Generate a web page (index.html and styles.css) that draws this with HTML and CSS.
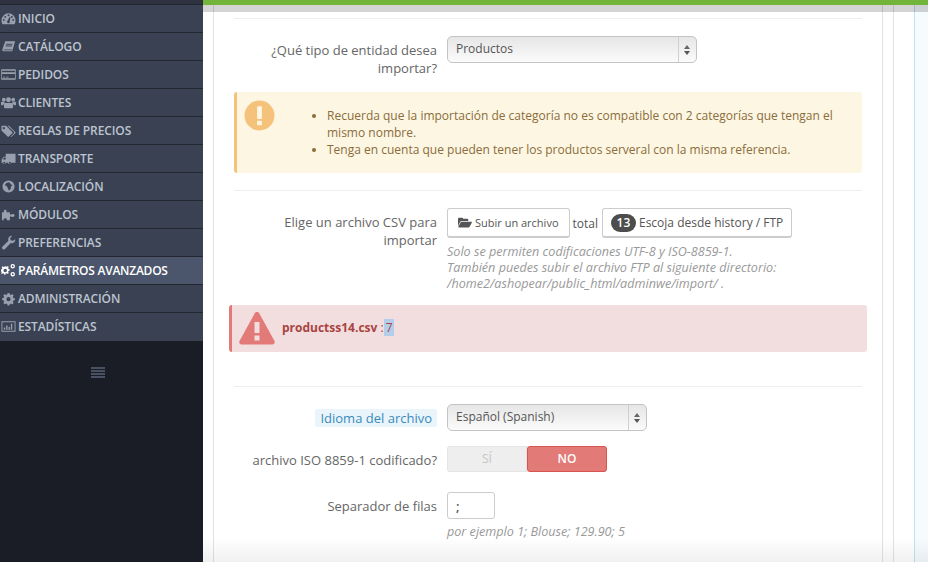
FILE: index.html
```html
<!DOCTYPE html>
<html>
<head>
  <title>Importar CSV</title>
  <link rel="stylesheet" href="styles.css">
</head>
<body>

  <!-- Sidebar -->
  <div class="sidebar">
    <ul class="menu">
      <li><svg viewBox="0 0 16 16"><path d="M8 2.500a7.500 7.500 0 0 0-7.500 7.500c0 1.500.4 2.800 1.100 4h12.800c.7-1.200 1.100-2.500 1.100-4A7.500 7.500 0 0 0 8 2.500zM3 10.500a1 1 0 1 1 0-2 1 1 0 0 1 0 2zm1.500-3.200a1 1 0 1 1 0-2 1 1 0 0 1 0 2zM8 5.500a1 1 0 1 1 0-2 1 1 0 0 1 0 2zm1.400 6.500a1.500 1.500 0 1 1-2.500-1.500l2.500-4.300.8.300-1 4.700c.2.200.2.500.2.800zm2.100-4.700a1 1 0 1 1 0-2 1 1 0 0 1 0 2zM13 10.500a1 1 0 1 1 0-2 1 1 0 0 1 0 2z"/></svg>Inicio</li>
      <li><svg viewBox="0 0 16 16"><path d="M4.500 2.500h10.500l-.3 1-2.700 9.500H2.500C1.500 13 1.300 12 1.500 11zM5.500 5v1h6.500l.3-1zM5 7v1h6.500l.3-1zM3 11.200c-.2.500 0 .8.500.8h8.200l.3-.8z"/></svg>Catálogo</li>
      <li><svg viewBox="0 0 16 16"><path fill-rule="evenodd" d="M1 2.500h14a.8.800 0 0 1 .8.800v9.400a.8.800 0 0 1-.8.800H1a.8.800 0 0 1-.8-.8V3.300A.8.800 0 0 1 1 2.500zM1 4v1.500h14V4zm0 3.500V12h14V7.500zM2 10.500h2.500v.8H2zm3.500 0h2.500v.8H5.500z"/></svg>Pedidos</li>
      <li><svg viewBox="0 0 16 16"><circle cx="3" cy="5" r="2"/><circle cx="13" cy="5" r="2"/><circle cx="8" cy="5" r="2.600"/><path d="M0 8.200C0 7.500.6 7.300 1.500 7.300h2.300c.2 1 .1 1.700-.6 2.400-.5.400-.8.800-1 1.300H1c-.6 0-1-.4-1-1zM16 8.200c0-.7-.6-.9-1.500-.9h-2.300c-.2 1-.1 1.700.6 2.400.5.400.8.800 1 1.300H15c.6 0 1-.4 1-1zM5 8.500h6c1 0 1.800.7 1.800 1.700V13c0 .6-.4 1-1 1H4.200c-.6 0-1-.4-1-1v-2.800C3.200 9.200 4 8.500 5 8.500z"/></svg>Clientes</li>
      <li><svg viewBox="0 0 16 16"><path fill-rule="evenodd" d="M.5 3h5l6.500 6.500a1 1 0 0 1 0 1.400l-3.600 3.600a1 1 0 0 1-1.400 0L.5 8zM3 4.300a1.200 1.200 0 1 0 0 2.400 1.200 1.200 0 0 0 0-2.400z"/><path d="M7 3h1.500l6.700 6.500a1 1 0 0 1 0 1.400l-3.600 3.600c-.4.400-.9.400-1.300.1l3.200-3.300c.6-.6.600-1.600 0-2.200z"/></svg>Reglas de precios</li>
      <li><svg viewBox="0 0 16 16"><path fill-rule="evenodd" d="M5 3h10.500v9.500H11a1.800 1.800 0 0 1-3.500 0H5.200a1.800 1.800 0 0 1-3.500 0H.6V9l2.200-3H5zM3.200 7L1.800 9H5V7zM3.500 11.500a1 1 0 1 0 0 2 1 1 0 0 0 0-2zm6 0a1 1 0 1 0 0 2 1 1 0 0 0 0-2z"/></svg>Transporte</li>
      <li><svg viewBox="0 0 16 16"><path fill-rule="evenodd" d="M8 1.500a6.500 6.500 0 1 1 0 13 6.500 6.500 0 0 1 0-13zM9 3.500l-3 .5-2 2.500 2.500 1.500 1 2.500 1 2 2-2.500v-2l2-1.500-1.500-.5-1-1z"/></svg>Localización</li>
      <li><svg viewBox="0 0 16 16"><path d="M1 5.500h2.300C2.800 4.500 3 3 4.500 3s1.700 1.500 1.200 2.500H9.500V8h1.300c.5-.8 3.700-.9 3.700 1s-3.200 1.800-3.700 1H9.500v4H6c.5-1 .3-2-1.500-2s-2 1-1.500 2H1z"/></svg>Módulos</li>
      <li><svg viewBox="0 0 16 16"><path d="M15.200 4.500c.5 2.700-2.200 5-4.800 4.100l-6.200 6.200a1.700 1.700 0 0 1-2.500-2.500l6.200-6.200C7 3 9.300.3 12 .8L9.800 3.200l.5 2.500 2.500.5z"/></svg>Preferencias</li>
      <li class="active"><svg viewBox="0 0 16 16"><path fill-rule="evenodd" d="M5 3.500l1.300.4.900-.8 1.100 1.100-.7 1 .4 1.100 1.200.3v1.600l-1.200.3-.4 1.100.7 1-1.100 1.100-.9-.8-1.300.4-.3 1.200H3.500l-.3-1.200-1.100-.4-1 .8L0 11.100l.7-1L.3 9 0 8.600V6.900l1-.3.400-1.100-.7-1 1.100-1.100 1 .8L4 3.800zM4.500 6a1.900 1.900 0 1 0 0 3.800 1.900 1.900 0 0 0 0-3.800z"/><path fill-rule="evenodd" d="M12.500 1a2.400 2.400 0 1 1 0 4.800 2.400 2.400 0 0 1 0-4.800zm0 1.400a1 1 0 1 0 0 2 1 1 0 0 0 0-2zM12.500 9.500a2.400 2.400 0 1 1 0 4.800 2.400 2.400 0 0 1 0-4.800zm0 1.400a1 1 0 1 0 0 2 1 1 0 0 0 0-2z"/></svg>Parámetros avanzados</li>
      <li><svg viewBox="0 0 16 16"><path fill-rule="evenodd" d="M7 2h2l.4 1.700 1.200.5L12 3.300l1.500 1.500-.9 1.400.5 1.200 1.700.4v2l-1.700.4-.5 1.200.9 1.400-1.500 1.500-1.400-.9-1.200.5L9 15.500H7l-.4-1.700-1.200-.5-1.400.9-1.500-1.500.9-1.400-.5-1.200L1.200 9.700v-2l1.700-.4.5-1.200-.9-1.400L4 3.300l1.400.9 1.200-.5zM8 6.500a2.200 2.200 0 1 0 0 4.400 2.200 2.200 0 0 0 0-4.400z"/></svg>Administración</li>
      <li><svg viewBox="0 0 16 16"><path fill-rule="evenodd" d="M.5 2.500h15v11H.5zM1.500 3.500v9h13v-9zM3 9h1.500v2.500H3zm2.500-2h1.500v4.500H5.500zm2.500 1.500h1.500v3H8zM10.500 5H12v6.500h-1.500z"/></svg>Estadísticas</li>
    </ul>
    <div class="collapse"><span></span><span></span><span></span><span></span></div>
  </div>

  <!-- Content -->
  <div class="content">
    <div class="greenbar"></div>
    <div class="shade-top"></div>
    <div class="shade-bottom"></div>
    <div class="columns">
      <div class="panel">
        <hr class="first">

        <div class="row row-entity">
          <label>¿Qué tipo de entidad desea importar?</label>
          <div class="fake-select wide"><span>Productos</span><i class="arrows"></i></div>
        </div>

        <div class="alert warning">
          <div class="alert-icon"><svg viewBox="0 0 32 32"><circle cx="16" cy="16" r="15.500" fill="#f5c27c"/><rect x="13.500" y="6.500" width="5" height="13" rx="1" fill="#fdf6e3"/><rect x="13.500" y="21.500" width="5" height="4.500" rx=".5" fill="#fdf6e3"/></svg></div>
          <ul>
            <li>Recuerda que la importación de categoría no es compatible con 2 categorías que tengan el mismo nombre.</li>
            <li>Tenga en cuenta que pueden tener los productos serveral con la misma referencia.</li>
          </ul>
        </div>

        <hr>

        <div class="row row-file">
          <label>Elige un archivo CSV para importar</label>
          <div>
            <div class="file-actions">
              <button class="btn btn-upload"><svg viewBox="0 0 18 14"><path d="M0 2.500C0 1.500.7 1 1.500 1h3.800c.8 0 1 .8 1.500 1.200h5c.8 0 1.400.5 1.400 1.300V5H4.500c-.8 0-1.300.4-1.600 1L0 11.500zM4.600 6h12.400c.7 0 1 .6.700 1.200l-2.800 5.300c-.3.600-.8.900-1.400.9H1.200c-.7 0-1-.6-.7-1.200l2.800-5.300C3.600 6.300 4 6 4.600 6z"/></svg>Subir un archivo</button>
              <span class="total">total</span>
              <button class="btn btn-history"><b class="badge">13</b>Escoja desde history / FTP</button>
            </div>
            <p class="help">Solo se permiten codificaciones UTF-8 y ISO-8859-1.<br>También puedes subir el archivo FTP al siguiente directorio:<br>/home2/ashopear/public_html/adminwe/import/ .</p>
          </div>
        </div>

        <div class="alert danger">
          <svg viewBox="0 0 36 33"><path d="M18 0c1 0 1.700.5 2.200 1.300l15.300 27.700c.8 1.500-.2 3.500-2 3.500h-31c-1.800 0-2.800-2-2-3.500L15.800 1.300C16.300.5 17 0 18 0z" fill="#e27b78"/><rect x="15.500" y="10" width="5" height="11" fill="#f2dede"/><rect x="15.500" y="23.500" width="5" height="5" fill="#f2dede"/></svg>
          <p><b>productss14.csv</b> <span class="colon">:</span> <span class="selected">7</span></p>
        </div>

        <hr class="after-danger">

        <div class="row row-lang">
          <label><span class="hint">Idioma del archivo</span></label>
          <div class="fake-select"><span>Español (Spanish)</span><i class="arrows"></i></div>
        </div>

        <div class="row row-iso">
          <label>archivo ISO 8859-1 codificado?</label>
          <div class="toggle"><span class="yes">SÍ</span><span class="no">NO</span></div>
        </div>

        <div class="row row-sep">
          <label>Separador de filas</label>
          <div>
            <input class="small-input" type="text" value=";">
            <p class="help">por ejemplo 1; Blouse; 129.90; 5</p>
          </div>
        </div>
      </div>
      <div class="rail"></div>
      <div class="rail-wide"></div>
      <div class="aside"></div>
    </div>
  </div>

</body>
</html>
```

FILE: styles.css
```css
* {
  box-sizing: border-box;
}
html, body {
  height: 100%;
}
body {
  margin: 0;
  display: flex;
  overflow: hidden;
  font-family: "Open Sans", Arial, sans-serif;
  font-size: 13px;
  color: #666;
  background: #fff;
}

/* sidebar */
.sidebar {
  width: 203px;
  flex: none;
  background: #1a1d26;
  padding-top: 4px;
  position: relative;
}
.sidebar::before {
  content: "";
  display: block;
  height: 4px;
  margin-top: -4px;
  background: #2d3140;
}
.menu {
  list-style: none;
  margin: 0;
  padding: 0 0 1px;
  background: #3a4152;
}
.menu li {
  height: 28px;
  display: flex;
  align-items: center;
  border-top: 1px solid #23272f;
  padding: 0 0 0 1px;
  font-size: 12px;
  font-weight: 600;
  letter-spacing: -0.1px;
  text-transform: uppercase;
  color: #bcc4d0;
  white-space: nowrap;
}
.menu li svg {
  width: 15px;
  height: 15px;
  margin-right: 2px;
  flex: none;
  fill: #99a0ad;
}
.menu li.active {
  background: #4b566c;
  color: #fff;
  letter-spacing: -0.25px;
}
.menu li.active svg {
  fill: #fff;
}
.collapse {
  width: 14px;
  margin: 26px 0 0 91px;
}
.collapse span {
  display: block;
  height: 2px;
  margin-bottom: 1px;
  background: #4a5162;
}

/* content */
.content {
  flex: 1;
  min-width: 0;
  position: relative;
  display: flex;
  flex-direction: column;
}
.greenbar {
  height: 5px;
  flex: none;
  background: #72b53a;
}
.shade-top {
  position: absolute;
  top: 5px;
  left: 0;
  right: 0;
  height: 7px;
  background: rgba(0, 0, 0, 0.17);
}
.shade-bottom {
  position: absolute;
  bottom: 0;
  left: 0;
  right: 0;
  height: 24px;
  background: linear-gradient(rgba(0, 0, 0, 0), rgba(0, 0, 0, 0.06));
}
.columns {
  flex: 1;
  display: flex;
  padding-left: 10px;
}
.panel {
  width: 670px;
  flex: none;
  border-left: 1px solid #e2e2e2;
  border-right: 1px solid #e2e2e2;
  padding: 13px 20px 0;
}
.rail {
  width: 11px;
  flex: none;
  border-right: 1px solid #e2e2e2;
}
.rail-wide {
  width: 21px;
  flex: none;
  border-right: 1px solid #bfe3f0;
}
.aside {
  flex: 1;
  background: #f6fbfe;
}

hr {
  border: 0;
  border-top: 1px solid #eee;
  margin: 17px 0 17px;
}
hr.first {
  margin: 0 0 17px;
}
hr.after-danger {
  margin: 34px 0 17px;
}

/* form */
.row {
  display: flex;
  gap: 10px;
}
.row > label {
  width: 203px;
  flex: none;
  text-align: right;
  line-height: 18px;
  color: #666;
}
.row-entity {
  height: 56px;
}
.row-entity > label {
  padding-top: 5px;
}
.row-file > label {
  padding-top: 5px;
}
.row-lang {
  height: 42px;
}
.row-lang > label {
  padding-top: 5px;
}
.row-iso {
  height: 46px;
}
.row-iso > label {
  padding-top: 5px;
}
.row-sep > label {
  padding-top: 5px;
}
.hint {
  display: inline-block;
  padding: 0 5px;
  border-radius: 2px;
  background: #eaf5fb;
  color: #3a8bbb;
}
.fake-select {
  width: 200px;
  height: 27px;
  display: flex;
  align-items: center;
  justify-content: space-between;
  padding-left: 8px;
  border: 1px solid #c4c4c4;
  border-radius: 5px;
  background: linear-gradient(#e6e6e6, #fbfbfb);
  font-size: 12px;
  color: #555;
}
.fake-select.wide {
  width: 250px;
}
.fake-select span {
  margin-top: -3px;
}
.arrows {
  width: 18px;
  height: 100%;
  border-left: 1px solid #d0d0d0;
  position: relative;
}
.arrows::before, .arrows::after {
  content: "";
  position: absolute;
  left: 5px;
  border-left: 3px solid transparent;
  border-right: 3px solid transparent;
}
.arrows::before {
  top: 8px;
  border-bottom: 4px solid #666;
}
.arrows::after {
  top: 14px;
  border-top: 4px solid #555;
}

/* alerts */
.alert {
  border-radius: 3px;
}
.warning {
  height: 81px;
  display: flex;
  padding: 8px 0 0 7px;
  background: #fdf6e3;
  border-left: 3px solid #f5c27c;
  color: #8a6d3b;
  font-size: 12px;
  line-height: 17px;
}
.alert-icon svg {
  width: 31px;
  height: 31px;
  display: block;
}
.warning ul {
  margin: 7px 0 0;
  padding: 0 20px 0 52px;
}
.danger {
  height: 47px;
  display: flex;
  align-items: center;
  margin: 0 -5px;
  padding-left: 7px;
  background: #f2dede;
  border-left: 3px solid #e27b78;
  color: #a94442;
  font-size: 12px;
}
.danger svg {
  width: 36px;
  height: 33px;
  margin-right: 7px;
  flex: none;
}
.danger p {
  margin: 0 0 2px;
}
.colon {
  font-weight: 400;
}
.selected {
  display: inline-block;
  width: 10px;
  margin-left: -3px;
  padding-left: 2px;
  background: #b3cdea;
}

/* buttons */
.file-actions {
  display: flex;
  align-items: center;
  height: 30px;
}
.btn {
  height: 30px;
  display: flex;
  align-items: center;
  padding: 0 10px;
  border: 1px solid #ccc;
  border-bottom-width: 2px;
  border-radius: 3px;
  background: #fff;
  font-family: inherit;
  color: #555;
  white-space: nowrap;
}
.btn-upload {
  font-size: 11px;
}
.btn svg {
  width: 14px;
  height: 11px;
  margin-right: 3px;
  fill: #555;
}
.total {
  margin: 0 4px 0 3px;
  font-size: 12px;
  color: #555;
}
.btn-history {
  padding: 0 8px;
  font-size: 12px;
}
.badge {
  width: 25px;
  height: 18px;
  margin-right: 3px;
  border-radius: 9px;
  background: #4d4d4d;
  color: #fff;
  font-size: 12px;
  font-weight: 600;
  line-height: 18px;
  text-align: center;
}
.help {
  margin: 6px 0 13px;
  font-size: 12.600px;
  font-style: italic;
  line-height: 16px;
  color: #999;
}
.row-sep .help {
  margin-top: 5px;
}
.toggle {
  width: 160px;
  height: 26px;
  display: flex;
  border-radius: 3px;
  background: #eee;
  font-size: 12px;
  text-align: center;
  line-height: 24px;
}
.toggle span {
  flex: 1;
}
.yes {
  border: 1px solid #e4e4e4;
  border-radius: 3px 0 0 3px;
  color: #c6c6c6;
}
.no {
  border: 1px solid #d9534f;
  border-radius: 3px;
  background: #e27b78;
  color: #fff;
  font-weight: 600;
}
.small-input {
  width: 48px;
  height: 27px;
  display: block;
  padding: 0 0 0 8px;
  border: 1px solid #ccc;
  border-radius: 3px;
  font-family: inherit;
  font-size: 13px;
  font-weight: 600;
  color: #555;
}
```
